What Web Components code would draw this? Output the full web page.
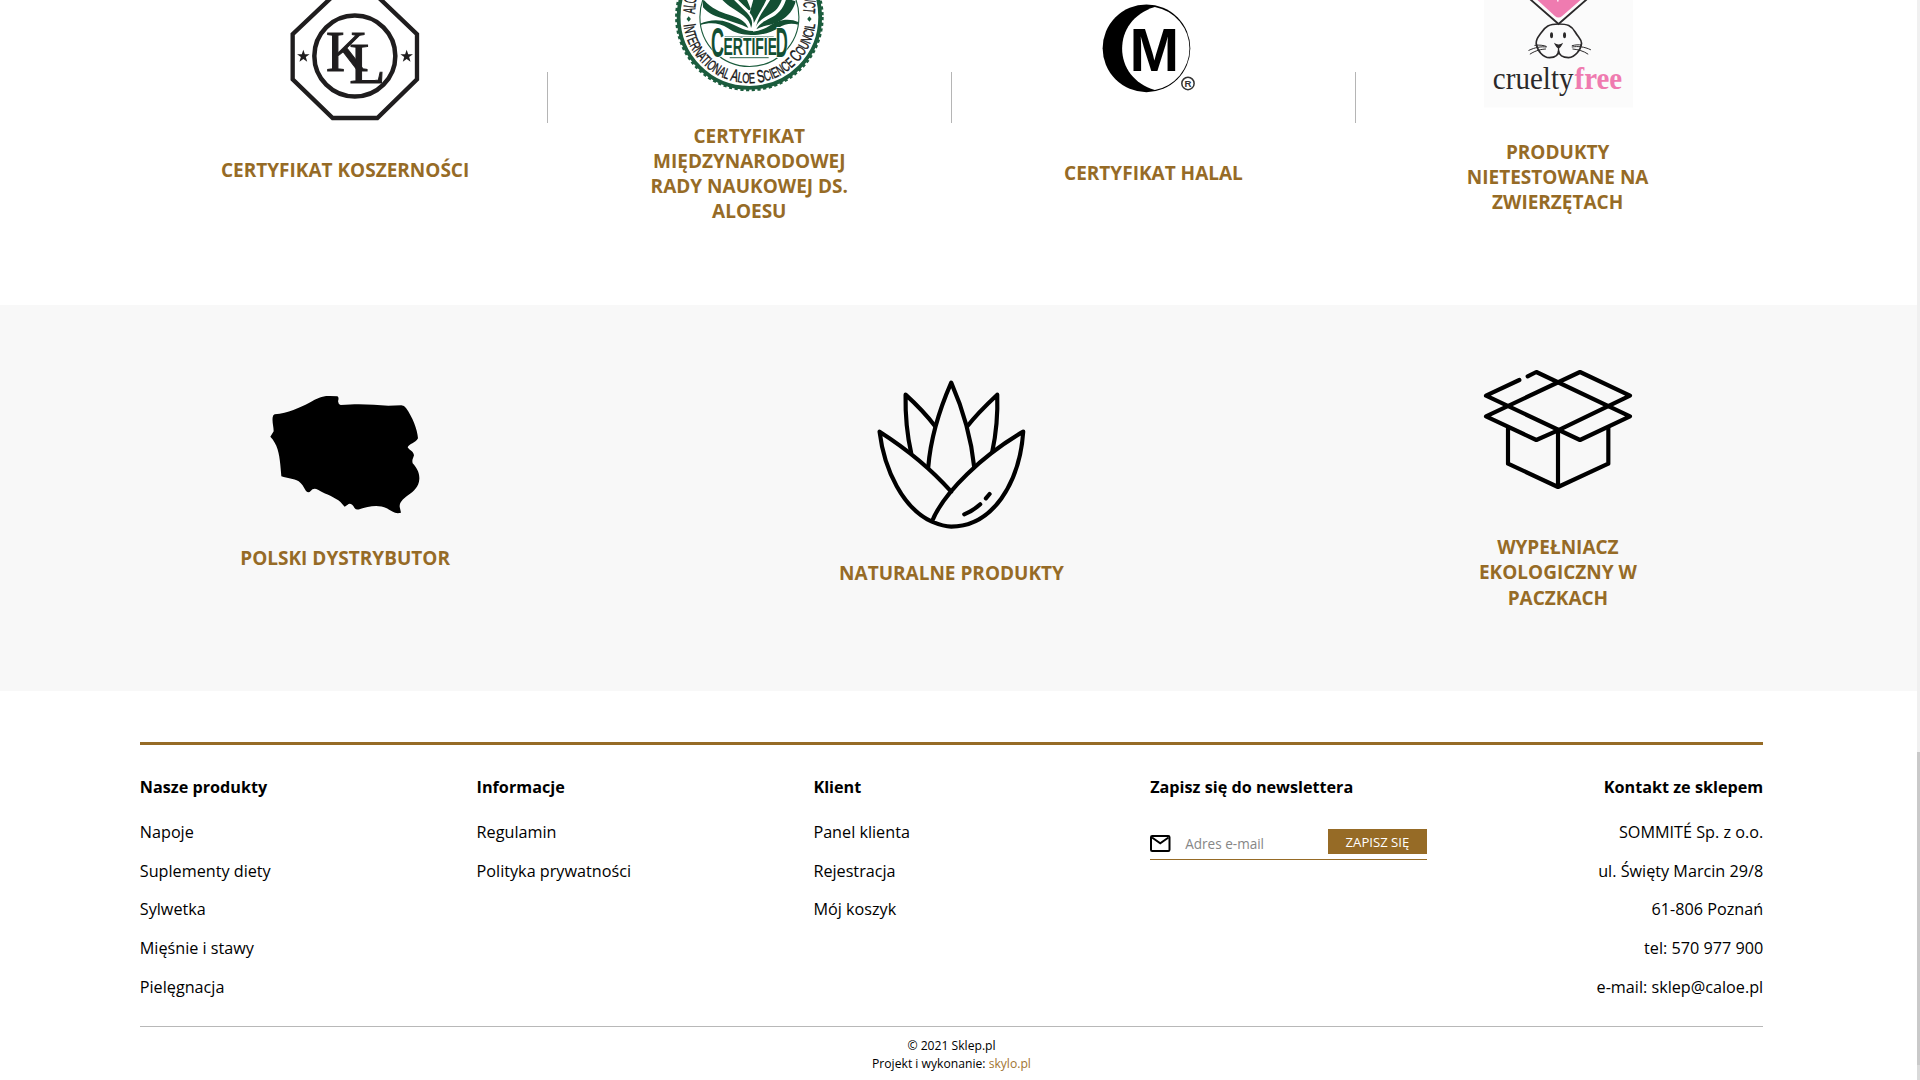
<!DOCTYPE html>
<html lang="pl">
<head>
<meta charset="utf-8">
<title>Sklep.pl</title>
<style>
html,body{margin:0;height:100%;overflow:hidden;background:#fff}
body{font-family:"Open Sans","Noto Sans",sans-serif;color:#000}
</style>
</head>
<body>
<shop-page></shop-page>
<script>
const define = (name, html) => {
  const t = document.createElement('template');
  t.innerHTML = html;
  customElements.define(name, class extends HTMLElement {
    constructor() {
      super();
      this.attachShadow({ mode: 'open' }).append(t.content.cloneNode(true));
    }
  });
};

/* Badge card: artwork on top, caption below */
define('badge-card', `
<style>
:host{display:flex;flex-direction:column;align-items:center;width:404.2px;flex:none;text-align:center}
::slotted(*){display:block}
.title{margin-top:1.5px;font-weight:700;font-size:19px;line-height:25.33px;color:#966b26}
</style>
<slot name="art"></slot>
<div class="title"><slot></slot></div>`);

define('v-rule', `
<style>:host{display:block;flex:none;width:1px;height:51px;margin:72px -.5px 0;background:#b5b5b5}</style>`);

define('art-kosher', `
<style>:host{display:block}svg{display:block}</style>
<svg width="404" height="156.3" viewBox="143 0 404 156.3" preserveAspectRatio="xMidYMin meet">
<g transform="translate(200 .3) scale(.33333)" fill="none" stroke="#1f1d1e">
<path stroke-width="13" d="M278 102V237L398 353H532L651 237V102L532 -12H398Z"/>
<circle cx="464.500" cy="167" r="121.500" stroke-width="13.500"/>
<g fill="#1f1d1e" stroke="none">
<path d="M310 148l4.600 13.500 14.200.2-11.400 8.600 4.200 13.700-11.600-8.200-11.600 8.200 4.200-13.700-11.400-8.600 14.200-.2z"/>
<path transform="translate(310)" d="M310 148l4.600 13.500 14.200.2-11.400 8.600 4.200 13.700-11.600-8.200-11.600 8.200 4.200-13.700-11.400-8.600 14.200-.2z"/>
</g>
<g fill="#1f1d1e" stroke="#1f1d1e" stroke-width="3" font-family="Liberation Serif" font-size="174">
<text x="378" y="213" textLength="125" lengthAdjust="spacingAndGlyphs">K</text>
<text x="448" y="248" textLength="109" lengthAdjust="spacingAndGlyphs">L</text></g>
</g></svg>`);

define('art-aloe-seal', `
<style>:host{display:block}svg{display:block}</style>
<svg width="404" height="122" viewBox="547.3 0 404 122">
<defs>
<path id="low" d="M683.500 17A66.200 66.200 0 0 0 815.900 17"/>
<clipPath id="in"><circle cx="749.700" cy="17" r="49"/></clipPath>
</defs>
<circle cx="749.700" cy="17" r="70.800" fill="none" stroke="#1b5c3d" stroke-width="3.800"/>
<circle cx="749.700" cy="17" r="73" fill="none" stroke="#1b5c3d" stroke-width="2.600" stroke-dasharray="3.200 2.533"/>
<circle cx="749.700" cy="17" r="49.500" fill="none" stroke="#1b5c3d" stroke-width="1.100"/>
<g clip-path="url(#in)"><g transform="translate(640 0) scale(.33333)" fill="#134f33">
<path d="M176 74C205 58 240 57 268 68C292 77 308 91 340 93L340 105C310 106 285 99 265 85C240 68 210 66 180 76Z"/>
<path d="M480 68C445 50 412 62 392 76C374 88 355 93 338 95L330 105C366 106 395 98 416 84C438 70 458 68 480 76Z"/>
<path d="M188 -5C212 24 240 36 268 44C298 53 318 64 326 84C300 70 276 66 254 57C230 50 206 42 190 22Z"/>
<path d="M244 -5C262 18 290 30 310 46C325 58 332 70 334 84C342 66 334 52 322 38L278 -5Z"/>
<path d="M290 -5L324 28Q330 34 333 26L320 -5Z"/>
<path d="M342 -5L330 38C337 46 343 56 342 70C352 50 366 30 382 -5Z"/>
<path d="M394 -5C378 25 357 45 349 80C356 64 370 54 388 44C412 32 420 18 428 -5Z"/>
<path d="M440 -5C432 26 414 44 392 54C372 64 358 72 350 88C372 75 398 76 422 62C446 50 462 28 468 4Z"/>
</g></g>
<g font-family="Liberation Sans" fill="#151515" stroke="#151515" stroke-width=".4" font-size="17.500">
<text><textPath href="#low" startOffset="7.500" textLength="193" lengthAdjust="spacingAndGlyphs"><tspan>I</tspan><tspan font-size="14.500">NTERNATIONAL </tspan>A<tspan font-size="14.500">LOE </tspan>S<tspan font-size="14.500">CIENCE </tspan>C<tspan font-size="14.500">OUNCIL</tspan></textPath></text>
<text transform="translate(695 14) rotate(-84) scale(.5 1)" font-size="17">ALO</text>
<text transform="translate(804.600 -4.500) rotate(94) scale(.5 1)" font-size="17">UCT</text></g>
<path fill="#1b5c3d" d="M689 16.200l2.200 2.800-2.200 2.800-2.200-2.800zM809.700 16.200l2.200 2.800-2.200 2.800-2.200-2.800z"/>
<path d="M725 37h49M730 57.700h39" stroke="#134f33" stroke-width=".9"/>
<g font-family="Liberation Sans" font-weight="bold" fill="#134f33" stroke="#fff" stroke-width="1.800" paint-order="stroke">
<text x="711.300" y="57" font-size="43" textLength="13" lengthAdjust="spacingAndGlyphs">C</text>
<text x="723.800" y="55" font-size="23.500" textLength="53.500" lengthAdjust="spacingAndGlyphs">ERTIFIE</text>
<text x="776" y="57" font-size="43" textLength="12" lengthAdjust="spacingAndGlyphs">D</text></g>
<g font-family="Liberation Sans"></g>
</svg>`);

define('art-halal', `
<style>:host{display:block}svg{display:block}</style>
<svg width="404" height="159.6" viewBox="951.5 0 404 159.6">
<g transform="translate(1040.300 .3) scale(.33333)">
<circle cx="320" cy="144" r="131.500" fill="#000"/>
<path fill="#fff" d="M345 20C280 40 247 90 247 145C247 200 282 250 345 269A126.500 126.500 0 0 0 345 20Z"/>
<text x="269" y="211" font-family="Liberation Sans" font-weight="bold" font-size="183" textLength="149" lengthAdjust="spacingAndGlyphs">M</text>
<circle cx="444.500" cy="249.500" r="18.500" fill="#fff" stroke="#333" stroke-width="4.500"/>
<text x="444.500" y="260" text-anchor="middle" font-family="Liberation Sans" font-weight="bold" font-size="29" fill="#333">R</text>
</g></svg>`);

define('art-cruelty-free', `
<style>:host{display:block}svg{display:block}</style>
<svg width="404" height="138" viewBox="1355.8 0 404 138">
<path fill="#fbfbfb" d="M1484 0h148.700v107.500H1484z"/>
<g transform="translate(1440 0) scale(.33333)" fill="none" stroke="#2b292a" stroke-linecap="round">
<path fill="#ef7bb0" stroke="none" d="M286 -5L344 48Q355 57 366 48L427 -5Z"/>
<path stroke="#fff" stroke-width="4" d="M353 -4V3"/>
<path stroke-width="5.500" d="M268 -4L355 72L442 -4"/>
<path stroke-width="5" d="M355 72C326 72 316 80 303 98C294 111 287 116 288 130C291 152 308 173 328 173C345 172 355 164 355 152C356 165 368 173 385 173C405 171 422 150 424 130C424 117 414 112 405 96C393 76 382 72 355 72Z"/>
<path stroke-width="3" d="M266 151C285 142 302 139 318 141M270 162C287 151 302 148 316 147M284 136C297 134 310 136 318 139M396 141C414 138 432 140 451 149M398 147C415 149 430 153 443 162M396 137C406 134 415 134 424 135"/>
<path fill="#2b292a" stroke-width="4" d="M346 133Q355 138 364 133Q360 141 355 144Q350 141 346 133ZM355 144V153"/>
<g fill="#2b292a" stroke="none"><ellipse cx="334" cy="106" rx="4.500" ry="9"/><ellipse cx="373" cy="106" rx="4.500" ry="9"/></g>
<text x="158" y="266" fill="#2b292a" stroke="none" font-family="Liberation Serif" font-size="95" textLength="242" lengthAdjust="spacingAndGlyphs">cruelty</text>
<text x="403" y="266" fill="#ef7bb0" stroke="none" font-family="Liberation Serif" font-weight="bold" font-size="96" textLength="143" lengthAdjust="spacingAndGlyphs">free</text>
</g></svg>`);

define('art-poland', `
<style>:host{display:block}svg{display:block}</style>
<svg width="404" height="239" viewBox="143 305 404 239">
<g transform="translate(230 370) scale(.33333)"><path d="M134 133C175 128 208 114 238 98C263 84 277 77 300 78L322 79Q327 81 325 90Q322 100 332 105C390 100 430 104 475 107L514 106Q523 106 528 114C548 142 562 178 564 205C556 220 538 221 533 232C538 242 550 242 552 256C550 265 545 268 548 280C560 293 569 308 568 327C567 350 551 364 534 376C517 389 509 397 509 410L513 428C496 433 486 424 470 415C445 403 415 409 388 418Q378 421 373 413C368 402 358 398 353 404L344 410C338 405 335 398 325 391C305 376 280 370 264 359Q250 352 242 363Q236 371 228 363C220 350 216 341 206 334C190 325 173 326 154 319L151 285C148 250 142 222 121 200L131 184C131 170 126 157 128 142Q129 135 134 133Z"/></g></svg>`);

define('art-aloe', `
<style>:host{display:block}svg{display:block}</style>
<svg width="404" height="254.3" viewBox="750.1 305 404 254.3">
<g transform="translate(820 360) scale(.33333)" fill="none" stroke="#000" stroke-width="12.500" stroke-linejoin="round" stroke-linecap="round">
<path d="M325 322C332 235 358 150 394 68C430 150 454 235 463 322"/>
<path d="M274 280C261 222 256 160 257 104C290 134 320 165 345 198"/>
<path d="M517 276C529 220 534 160 532 104C500 134 468 165 443 198"/>
<path d="M394 395C340 334 265 270 179 215C193 330 250 446 336 485C360 495 376 500 394 500C518 499 599 370 610 215C490 285 372 395 336 485"/>
<path d="M433 463Q460 452 481 433M498 415L509 402"/>
</g></svg>`);

define('art-box', `
<style>:host{display:block}svg{display:block}</style>
<svg width="404" height="228.6" viewBox="1356 305 404 228.6">
<g transform="translate(1440 350) scale(.33333)" fill="none" stroke="#000" stroke-width="12.500" stroke-linejoin="round" stroke-linecap="round">
<path d="M263 79L289 66L570 199L420 270L138 137L238 90"/>
<path d="M354 241L289 270L138 199L420 66L570 137L354 241V411M204 234V341L354 411L505 341V234"/>
</g></svg>`);

define('footer-column', `
<style>
:host{display:flex;flex-direction:column;flex:1 1 0;font-size:16.2px;line-height:38.6px}
h3{margin:0 0 7px;font-size:16.2px;font-weight:700;line-height:38.6px}
::slotted(a){display:block;color:inherit;text-decoration:none}
</style>
<h3><slot name="heading"></slot></h3><slot></slot>`);

define('newsletter-form', `
<style>
:host{display:flex;width:276.500px;height:30px;margin-top:15.700px;border-bottom:1.500px solid #966b26;line-height:normal}
svg{display:block;margin-top:6.500px;width:20.500px;height:17px;flex:none}
.ph{flex:1;margin:6px 0 0 14.500px;font-size:13.550px;line-height:18px;color:#868686}
button{all:unset;box-sizing:border-box;width:98.500px;height:25.500px;background:#966b26;color:#fff;font-size:13.150px;line-height:26px;text-align:center}
</style>
<svg viewBox="0 0 20.500 17"><rect x="1" y="1" width="18.500" height="15" rx="1.200" fill="none" stroke="#000" stroke-width="2"/><path d="M2 2.500L10.250 8.200L18.500 2.500" fill="none" stroke="#000" stroke-width="2"/></svg>
<span class="ph">Adres e-mail</span>
<button>ZAPISZ SIĘ</button>`);

define('page-scrollbar', `
<style>
:host{display:flex;flex-direction:column;width:3px;flex:none;height:1080px;background:#f0f0f0}
i{display:block;margin-top:752px;height:313px;background:#c9c9c9}
b{display:block;flex:1;background:#dadada}
</style><i></i><b></b>`);

define('site-footer', `
<style>
:host{display:block;width:1623.400px;margin:51px 0 0 139.800px}
.cols{display:flex;border-top:3px solid #966b26;padding-top:22.600px;height:258.400px}
footer-column{flex:0 0 336.800px}
footer-column.end{flex:1;text-align:right}
.legal{border-top:1px solid #b8b8b8;padding-top:10.500px;text-align:center;font-size:12.150px;line-height:17.200px}
.legal a{color:#a27532}
</style>
<div class="cols">
<footer-column><span slot="heading">Nasze produkty</span><a>Napoje</a><a>Suplementy diety</a><a>Sylwetka</a><a>Mięśnie i stawy</a><a>Pielęgnacja</a></footer-column>
<footer-column><span slot="heading">Informacje</span><a>Regulamin</a><a>Polityka prywatności</a></footer-column>
<footer-column><span slot="heading">Klient</span><a>Panel klienta</a><a>Rejestracja</a><a>Mój koszyk</a></footer-column>
<footer-column><span slot="heading">Zapisz się do newslettera</span><newsletter-form></newsletter-form></footer-column>
<footer-column class="end"><span slot="heading">Kontakt ze sklepem</span><a>SOMMITÉ Sp. z o.o.</a><a>ul. Święty Marcin 29/8</a><a>61-806 Poznań</a><a>tel: 570 977 900</a><a>e-mail: sklep@caloe.pl</a></footer-column>
</div>
<div class="legal"><div>© 2021 Sklep.pl</div><div>Projekt i wykonanie: <a>skylo.pl</a></div></div>`);

define('shop-page', `
<style>
:host{display:flex;height:1080px;overflow:hidden}
main{flex:1;min-width:0}
.row{display:flex;align-items:flex-start;box-sizing:border-box;padding:0 0 0 143px}
.certs{height:305px}
.perks{height:386px;background:#f8f8f8;justify-content:space-between;padding-right:157px}
</style>
<main>
<section class="row certs">
<badge-card><art-kosher slot="art"></art-kosher>CERTYFIKAT KOSZERNOŚCI</badge-card><v-rule></v-rule>
<badge-card><art-aloe-seal slot="art"></art-aloe-seal>CERTYFIKAT<br>MIĘDZYNARODOWEJ<br>RADY NAUKOWEJ DS.<br>ALOESU</badge-card><v-rule></v-rule>
<badge-card><art-halal slot="art"></art-halal>CERTYFIKAT HALAL</badge-card><v-rule></v-rule>
<badge-card><art-cruelty-free slot="art"></art-cruelty-free>PRODUKTY<br>NIETESTOWANE NA<br>ZWIERZĘTACH</badge-card>
</section>
<section class="row perks">
<badge-card><art-poland slot="art"></art-poland>POLSKI DYSTRYBUTOR</badge-card>
<badge-card><art-aloe slot="art"></art-aloe>NATURALNE PRODUKTY</badge-card>
<badge-card><art-box slot="art"></art-box>WYPEŁNIACZ<br>EKOLOGICZNY W<br>PACZKACH</badge-card>
</section>
<site-footer></site-footer>
</main>
<page-scrollbar></page-scrollbar>`);
</script>
</body>
</html>
